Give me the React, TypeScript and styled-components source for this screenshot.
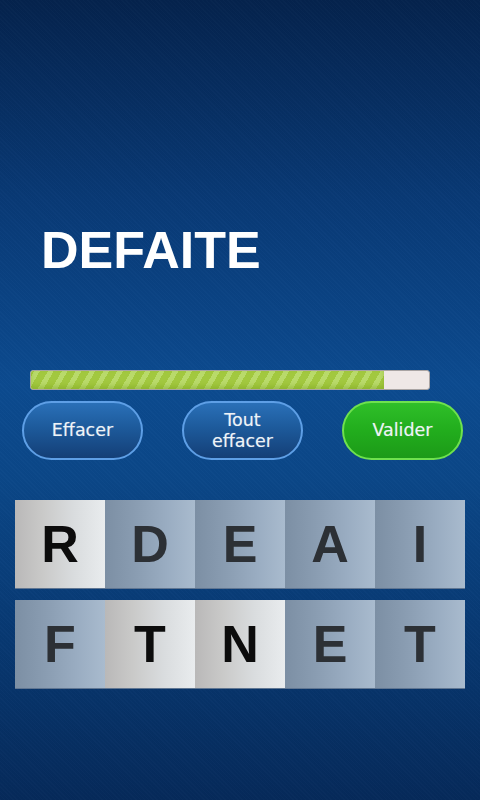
import React from "react";
import styled, { createGlobalStyle } from "styled-components";

const GlobalStyle = createGlobalStyle`
  html, body {
    margin: 0;
    padding: 0;
    background: #062a5b;
  }
  * {
    box-sizing: border-box;
  }
`;

type Tile = { letter: string; picked?: boolean };

const rows: Tile[][] = [
  [{ letter: "R", picked: true }, { letter: "D" }, { letter: "E" }, { letter: "A" }, { letter: "I" }],
  [{ letter: "F" }, { letter: "T", picked: true }, { letter: "N", picked: true }, { letter: "E" }, { letter: "T" }],
];

function App() {
  return (
    <Screen>
      <GlobalStyle />
      <Title>DEFAITE</Title>
      <Progress>
        <ProgressFill style={{ width: `${(353 / 398) * 100}%` }} />
      </Progress>
      <Actions>
        <ActionBtn>Effacer</ActionBtn>
        <ActionBtn>
          <span>Tout</span>
          <span>effacer</span>
        </ActionBtn>
        <ActionBtn $green>Valider</ActionBtn>
      </Actions>
      <Board>
        {rows.map((row, i) => (
          <TileRow key={i}>
            {row.map((t, j) => (
              <LetterTile key={j} $picked={t.picked}>
                {t.letter}
              </LetterTile>
            ))}
          </TileRow>
        ))}
      </Board>
    </Screen>
  );
}

const Screen = styled.div`
  width: 480px;
  height: 800px;
  overflow: hidden;
  display: flex;
  flex-direction: column;
  padding-top: 220px;
  background:
    repeating-linear-gradient(
      45deg,
      rgba(255, 255, 255, 0.012) 0px,
      rgba(255, 255, 255, 0.012) 1px,
      rgba(0, 0, 0, 0.015) 1px,
      rgba(0, 0, 0, 0.015) 3px
    ),
    linear-gradient(
      180deg,
      #05234d 0%,
      #093a76 25%,
      #0c4b90 48%,
      #0b4788 60%,
      #083a74 78%,
      #062a5a 100%
    );
  font-family: "Liberation Sans", Arial, sans-serif;
`;

const Title = styled.h1`
  margin: 0 0 0 41px;
  font-family: "Liberation Sans", Arial, sans-serif;
  font-weight: 700;
  font-size: 52px;
  line-height: 60px;
  color: #ffffff;
`;

const Progress = styled.div`
  margin: 90px 0 0 30px;
  width: 400px;
  height: 20px;
  border-radius: 3px;
  border: 1px solid #a9a4a3;
  background: #efe8e6;
  overflow: hidden;
`;

const ProgressFill = styled.div`
  height: 100%;
  background: repeating-linear-gradient(
    -60deg,
    #a2c83f 0px,
    #a2c83f 7px,
    #b9da6a 7px,
    #b9da6a 12px
  );
  box-shadow: inset 0 -3px 4px rgba(110, 150, 20, 0.35);
`;

const Actions = styled.div`
  display: flex;
  justify-content: space-between;
  padding: 0 17px 0 22px;
  margin-top: 11px;
`;

const ActionBtn = styled.div<{ $green?: boolean }>`
  width: 121px;
  height: 59px;
  border-radius: 30px;
  display: flex;
  flex-direction: column;
  align-items: center;
  justify-content: center;
  text-align: center;
  font-family: "DejaVu Sans", "Noto Sans", sans-serif;
  font-size: 17.5px;
  line-height: 20.5px;
  color: #eef3f7;
  text-shadow: 0 0 1px rgba(255, 255, 255, 0.4);
  border: 2px solid ${(p) => (p.$green ? "#6fe14e" : "#5e9fe6")};
  background: ${(p) =>
    p.$green
      ? "linear-gradient(180deg, #2fbf29 0%, #22ad1d 50%, #1c9a18 100%)"
      : "linear-gradient(180deg, #2a70b8 0%, #1d5a9b 45%, #143f77 100%)"};

  span {
    display: block;
  }
`;

const Board = styled.div`
  display: flex;
  flex-direction: column;
  gap: 11px;
  margin: 40px 0 0 15px;
`;

const TileRow = styled.div`
  display: flex;
  width: 450px;
  height: 89px;
  border-bottom: 1px solid #5f7591;
`;

const LetterTile = styled.div<{ $picked?: boolean }>`
  width: 90px;
  height: 100%;
  display: flex;
  align-items: center;
  justify-content: center;
  font-family: "Liberation Sans", Arial, sans-serif;
  font-weight: 700;
  font-size: 52px;
  color: ${(p) => (p.$picked ? "#0c0c0c" : "#2c3035")};
  background: ${(p) =>
    p.$picked
      ? "linear-gradient(90deg, #b9b8b8 0%, #c9c9c8 30%, #d9dcde 65%, #e9ecee 100%)"
      : "linear-gradient(90deg, #7c8fa4 0%, #8a9db2 35%, #9aadc2 70%, #a9bbce 100%)"};
`;

export default App;
